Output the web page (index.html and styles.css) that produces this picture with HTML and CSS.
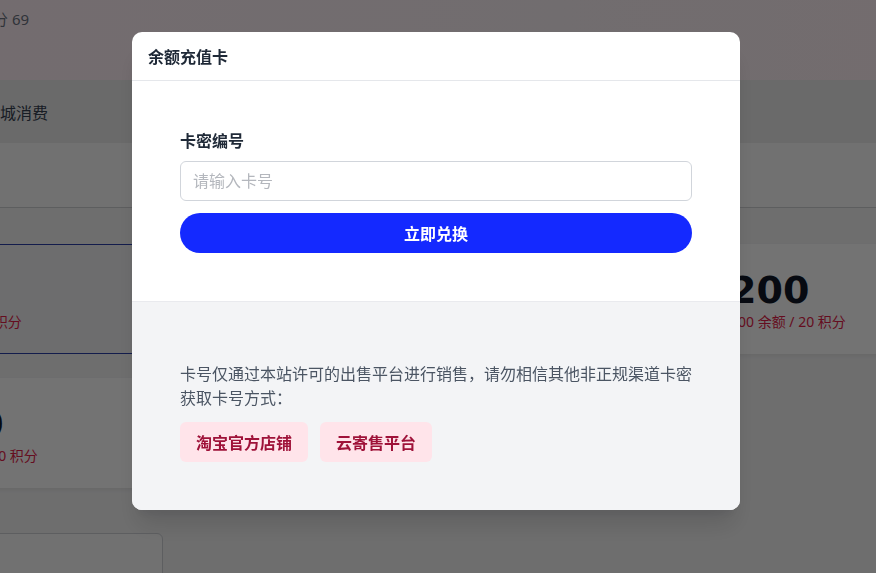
FILE: index.html
```html
<!DOCTYPE html>
<html lang="zh-CN">
<head>
<meta charset="utf-8">
<title>余额充值卡</title>
<link rel="stylesheet" href="styles.css">
</head>
<body>
<div class="page">
  <header class="top">
    <span class="points">积分 69</span>
  </header>
  <nav class="nav">
    <span class="nav-item">商城消费</span>
  </nav>
  <div class="tabs"></div>
  <main class="content">
    <div class="grid">
      <div class="card selected">
        <div class="amount">100</div>
        <div class="sub">1000 余额 / 10 积分</div>
      </div>
      <div class="card">
        <div class="amount">500</div>
        <div class="sub">500 余额 / 50 积分</div>
      </div>
      <div class="card">
        <div class="amount">200</div>
        <div class="sub">200 余额 / 20 积分</div>
      </div>
      <div class="card">
        <div class="amount">1000</div>
        <div class="sub">1000 余额 / 1000 积分</div>
      </div>
    </div>
    <div class="form-box"></div>
  </main>
</div>

<div class="overlay">
  <div class="modal">
    <div class="modal-head">余额充值卡</div>
    <div class="modal-body">
      <label class="label" for="card">卡密编号</label>
      <input class="input" id="card" type="text" placeholder="请输入卡号">
      <button class="primary" type="button">立即兑换</button>
    </div>
    <div class="modal-foot">
      <p class="note">卡号仅通过本站许可的出售平台进行销售，请勿相信其他非正规渠道卡密获取卡号方式：</p>
      <div class="links">
        <button class="link" type="button">淘宝官方店铺</button>
        <button class="link" type="button">云寄售平台</button>
      </div>
    </div>
  </div>
</div>
</body>
</html>
```

FILE: styles.css
```css
* { box-sizing: border-box; }
html, body { margin: 0; padding: 0; }
body {
  width: 876px;
  height: 573px;
  overflow: hidden;
  background: #f3f3f4;
  font-family: "Noto Sans", "Noto Sans CJK SC", sans-serif;
  color: #1f2937;
}
.page {
  margin-left: -40px;
  width: 1000px;
}
.top {
  height: 80px;
  background: linear-gradient(90deg, #fff0f6 0%, #fbf1f5 60%, #fff0f4 100%);
  padding-left: 18px;
  padding-top: 8px;
}
.points {
  font-size: 15px;
  line-height: 22px;
  color: #6b7280;
}
.nav {
  height: 63px;
  background: #eaeaeb;
  display: flex;
  align-items: center;
  padding-left: 24px;
}
.nav-item {
  font-size: 16px;
  color: #374151;
}
.tabs {
  height: 65px;
  background: #fafafa;
  border-bottom: 1px solid #cfd0d3;
}
.content {
  padding-top: 36px;
}
.grid {
  display: grid;
  grid-template-columns: repeat(3, 400px);
  column-gap: 16px;
  row-gap: 24px;
  margin-left: -86px;
}
.card {
  height: 110px;
  background: #ffffff;
  border-radius: 6px;
  padding: 24px 24px 0;
  box-shadow: 0 2px 4px rgba(0,0,0,0.06);
}
.card.selected {
  background: #f1f1f3;
  border-top: 1px solid #2a3ea8;
  border-bottom: 1px solid #2a3ea8;
  border-radius: 0;
  box-shadow: none;
  padding-top: 23px;
}
.amount {
  font-family: "DejaVu Sans", sans-serif;
  font-weight: 700;
  font-size: 38px;
  line-height: 44px;
  color: #111827;
}
.sub {
  font-size: 14px;
  line-height: 20px;
  margin-top: 0;
  color: #e11d48;
}
.form-box {
  margin-top: 45px;
  width: 203px;
  height: 60px;
  border: 1px solid #cfd1d6;
  border-radius: 6px;
  background: #fbfbfb;
}

.overlay {
  position: fixed;
  inset: 0;
  background: rgba(0, 0, 0, 0.55);
  display: flex;
  justify-content: center;
  align-items: flex-start;
  padding-top: 32px;
  padding-right: 4px;
}
.modal {
  width: 608px;
  background: #ffffff;
  border-radius: 10px;
  overflow: hidden;
  box-shadow: 0 20px 25px -5px rgba(0,0,0,0.12), 0 10px 10px -5px rgba(0,0,0,0.05);
}
.modal-head {
  height: 49px;
  padding: 0 16px;
  display: flex;
  align-items: center;
  font-size: 16px;
  font-weight: 700;
  color: #1f2937;
  border-bottom: 1px solid #e5e7eb;
}
.modal-body {
  padding: 48px 48px 48px;
  display: flex;
  flex-direction: column;
}
.label {
  font-size: 16px;
  font-weight: 700;
  line-height: 24px;
  color: #1f2937;
}
.input {
  margin-top: 8px;
  height: 40px;
  width: 100%;
  border: 1px solid #d1d5db;
  border-radius: 6px;
  padding: 0 12px;
  font-family: inherit;
  font-size: 16px;
  color: #1f2937;
  outline: none;
}
.input::placeholder { color: #b4b7bd; }
.primary {
  margin-top: 12px;
  height: 40px;
  width: 100%;
  border: 0;
  border-radius: 20px;
  background: #1429ff;
  color: #ffffff;
  font-family: inherit;
  font-size: 16px;
  font-weight: 700;
}
.modal-foot {
  background: #f3f4f6;
  border-top: 1px solid #e9eaee;
  padding: 60px 48px 48px;
}
.note {
  margin: 0;
  font-size: 16px;
  line-height: 24px;
  color: #4b5563;
}
.links {
  margin-top: 12px;
  display: flex;
  gap: 12px;
}
.link {
  height: 40px;
  padding: 0 16px;
  border: 0;
  border-radius: 6px;
  background: #ffe4ea;
  color: #9f1239;
  font-family: inherit;
  font-size: 16px;
  font-weight: 700;
}
```
